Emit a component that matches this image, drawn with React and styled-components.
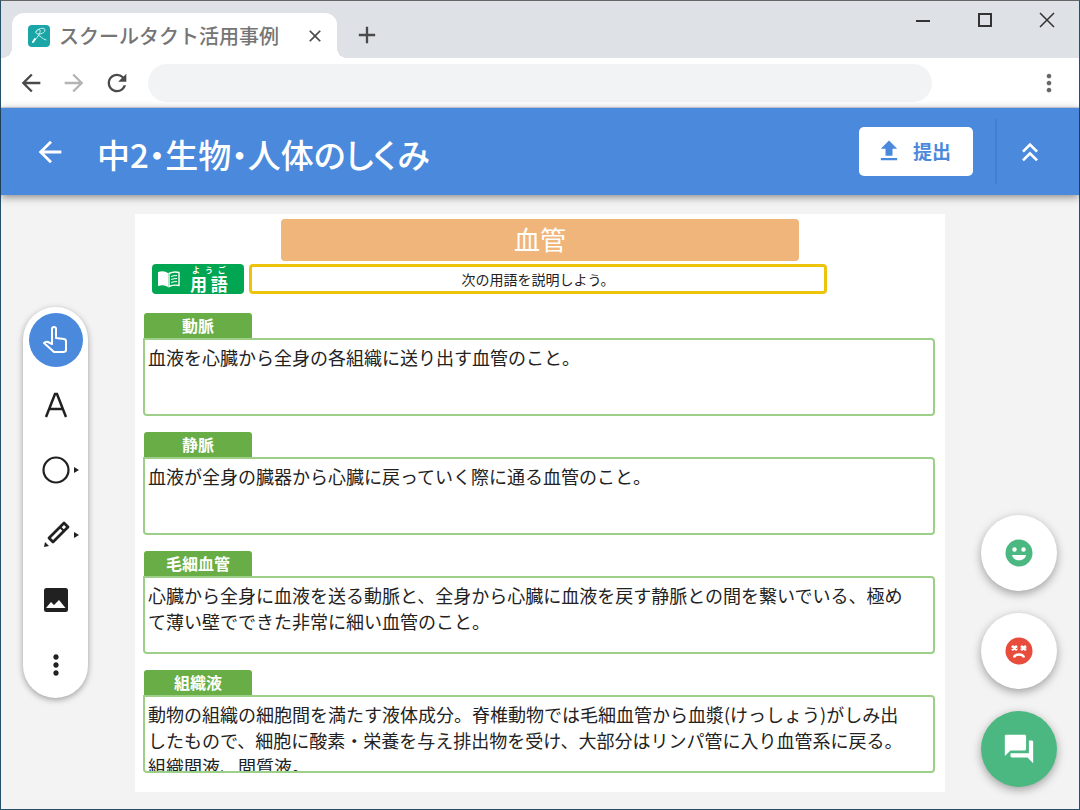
import React, { useState } from 'react'
import styled, { createGlobalStyle } from 'styled-components'
import {
  MdAdd,
  MdArrowBack,
  MdArrowForward,
  MdClose,
  MdForum,
  MdKeyboardDoubleArrowUp,
  MdMoreVert,
  MdRefresh,
  MdUpload,
} from 'react-icons/md'

const GlobalStyle = createGlobalStyle`
  * {
    box-sizing: border-box;
  }

  body {
    margin: 0;
    font-family: "Noto Sans CJK JP", "Noto Sans", sans-serif;
  }

  button {
    padding: 0;
    border: none;
    background: none;
    font-family: inherit;
    cursor: pointer;
  }

  svg {
    display: block;
  }
`

const Window = styled.div`
  display: flex;
  flex-direction: column;
  min-height: 100vh;
  border: 1px solid #24506a;
  border-top-color: #666;
  background-color: #f3f3f3;
`

const TabStrip = styled.div`
  display: flex;
  align-items: flex-end;
  height: 57px;
  padding-left: 11px;
  background-color: #dee1e6;
`

const Tab = styled.div`
  position: relative;
  display: flex;
  align-items: center;
  width: 325px;
  height: 45px;
  padding: 0 12px 0 16px;
  border-radius: 12px 12px 0 0;
  background-color: #fff;

  &::before,
  &::after {
    content: '';
    position: absolute;
    bottom: 0;
    width: 10px;
    height: 10px;
  }

  &::before {
    left: -10px;
    background: radial-gradient(circle at 0 0, transparent 10px, #fff 10px);
  }

  &::after {
    right: -10px;
    background: radial-gradient(circle at 100% 0, transparent 10px, #fff 10px);
  }
`

const TabTitle = styled.span`
  flex: 1;
  margin-left: 9px;
  color: #757575;
  font-size: 20px;
  font-weight: 500;
  line-height: 24px;
  white-space: nowrap;
`

const IconButton = styled.button`
  display: flex;
  justify-content: center;
  align-items: center;
  flex: none;
  width: ${(props) => props.$size || 28}px;
  height: ${(props) => props.$size || 28}px;
  color: ${(props) => props.$color || '#4a4a4a'};
`

const NewTab = styled(IconButton)`
  margin: 0 0 9px 16px;
`

const WindowControls = styled.div`
  display: flex;
  align-self: flex-start;
  gap: 34px;
  margin: 5px 18px 0 auto;
`

const Toolbar = styled.div`
  display: flex;
  align-items: center;
  gap: 15px;
  height: 50px;
  padding: 0 16px;
  border-bottom: 1px solid #d5dbe5;
  background-color: #fff;
`

const Address = styled.input`
  flex: 1;
  min-width: 0;
  height: 38px;
  margin: 0 88px 0 2px;
  padding: 0 20px;
  border: none;
  border-radius: 19px;
  background-color: #f1f3f4;
  font-size: 16px;
`

const Header = styled.header`
  position: relative;
  display: flex;
  align-items: center;
  height: 87px;
  padding: 0 33px 0 32px;
  background-color: #4a89dc;
  box-shadow: 0 2px 8px rgb(0 0 0 / 45%);
  color: #fff;
`

const Title = styled.h1`
  flex: 1;
  margin: 4px 0 0 30px;
  font-size: 33px;
  font-weight: 500;
  font-feature-settings: 'palt';
  line-height: 40px;
`

const Submit = styled.button`
  display: flex;
  align-items: center;
  justify-content: center;
  gap: 10px;
  width: 114px;
  height: 49px;
  padding: 0 6px 2px 0;
  border-radius: 5px;
  background-color: #fff;
  color: #4a89dc;
  font-size: 19px;
  font-weight: 700;
`

const Divider = styled.div`
  width: 2px;
  height: 65px;
  margin: 0 17px 0 22px;
  background-color: #427fd2;
`

const Workspace = styled.main`
  display: grid;
  grid-template-columns: 65px 1fr 76px;
  flex: 1;
  padding: 19px 22px 17px;
`

const Rail = styled.nav`
  display: flex;
  flex-direction: column;
  align-items: center;
  align-self: center;
  gap: 11px;
  margin-bottom: 2px;
  padding: 6px 0;
  border-radius: 33px;
  background-color: #fff;
  box-shadow: 0 2px 6px rgb(0 0 0 / 35%);
`

const Tool = styled.button`
  display: flex;
  justify-content: center;
  align-items: center;
  width: 54px;
  height: 54px;
  border-radius: 50%;
  background-color: ${(props) => (props.$active ? '#4a89dc' : 'transparent')};
  color: ${(props) => (props.$active ? '#fff' : '#212121')};
`

const Sheet = styled.article`
  margin: 0 36px 0 47px;
  padding-top: 5px;
  background-color: #fff;
`

const SheetTitle = styled.h2`
  height: 42px;
  margin: 0 146px;
  border-radius: 4px;
  background-color: #f0b57a;
  color: #fff;
  font-size: 26px;
  font-weight: 400;
  line-height: 40px;
  text-align: center;
`

const Instruction = styled.div`
  display: flex;
  gap: 5px;
  height: 30px;
  margin: 3px 118px 19px 17px;
`

const Badge = styled.div`
  display: flex;
  align-items: center;
  gap: 10px;
  width: 92px;
  padding-left: 6px;
  border-radius: 4px;
  background-color: #00a651;
  color: #fff;
`

const BadgeText = styled.ruby`
  display: flex;
  flex-direction: column-reverse;
  font-size: 17px;
  font-weight: 700;
  line-height: 18px;
  white-space: nowrap;

  rt {
    display: block;
    padding: 0 2px;
    font-size: 8px;
    line-height: 10px;
    text-align-last: justify;
  }
`

const Prompt = styled.p`
  flex: 1;
  margin: 0;
  border: 3px solid #edc40c;
  border-radius: 4px;
  color: #222;
  font-size: 14px;
  line-height: 24px;
  text-align: center;
`

const Term = styled.section`
  display: flex;
  flex-direction: column;
  margin: 0 10px 16px 8px;
`

const TermLabel = styled.label`
  width: 108px;
  margin-left: 1px;
  border-radius: 3px 3px 0 0;
  background-color: #68ad45;
  color: #fff;
  font-size: 16px;
  font-weight: 700;
  line-height: 25px;
  text-align: center;
`

const Answer = styled.textarea`
  display: block;
  width: 100%;
  height: 78px;
  padding: 4px 25px 0 3px;
  border: 2px solid #9ecf89;
  border-radius: 0 4px 4px 4px;
  outline: none;
  overflow: hidden;
  resize: none;
  background-color: #fff;
  color: #222;
  font-family: inherit;
  font-size: 18px;
  font-weight: 400;
  line-height: 26px;
`

const Actions = styled.div`
  display: flex;
  flex-direction: column;
  align-self: end;
  gap: 22px;
  margin-bottom: 5px;
`

const Fab = styled.button`
  display: flex;
  justify-content: center;
  align-items: center;
  width: 76px;
  height: 76px;
  border-radius: 50%;
  background-color: ${(props) => props.$bg || '#fff'};
  box-shadow: 0 3px 10px rgb(0 0 0 / 35%);
  color: ${(props) => props.$color};
`

const Favicon = () => (
  <svg width="22" height="22" viewBox="0 0 22 22" fill="none" stroke="#c9f0ee" strokeLinecap="round">
    <rect width="22" height="22" rx="4" fill="#1aa6a6" stroke="none" />
    <path d="M8 7c2-4 9-5 9-2 0 4-8 5-9 3s3-5 4-3c1 3-3 8-6 11" />
    <path d="M10 10c3 1 4 4 8 5" />
    <path d="M5 17l2-3" stroke="#fff" strokeWidth="2" />
  </svg>
)

const PointIcon = () => (
  <svg width="30" height="30" viewBox="0 0 30 30" fill="none" stroke="currentColor" strokeWidth="2" strokeLinejoin="round">
    <path d="M11 19V4a2 2 0 0 1 4 0v9l8 1q2 0 2 3v8q0 2-3 2H13L3 18q2-2 4-1l4 2z" />
  </svg>
)

const TextIcon = () => (
  <svg width="28" height="28" viewBox="0 0 28 28" fill="none" stroke="currentColor" strokeWidth="2.5">
    <path d="M4 26 13 3h2l9 23M8 18h12" />
  </svg>
)

const ShapeIcon = () => (
  <svg width="48" height="30" viewBox="0 0 48 30">
    <circle cx="24" cy="15" r="12.5" fill="none" stroke="currentColor" strokeWidth="2.2" />
    <path d="M42 12v6l5-3z" fill="currentColor" />
  </svg>
)

const PenIcon = () => (
  <svg width="48" height="30" viewBox="0 0 48 30">
    <path
      d="M32 3 36 7 21 22 17 18z"
      fill="none"
      stroke="currentColor"
      strokeWidth="2.8"
      strokeLinejoin="round"
    />
    <path d="M28 7 32 11" stroke="currentColor" strokeWidth="2" />
    <path d="M12 27l1-5 4 4z" fill="currentColor" />
    <path d="M42 12v6l5-3z" fill="currentColor" />
  </svg>
)

const ImageIcon = () => (
  <svg width="26" height="26" viewBox="0 0 26 26">
    <rect x="1" y="1" width="24" height="24" rx="2.5" fill="currentColor" />
    <path d="M3 21 8 15l3 3 5-5L22.5 21z" fill="#fff" />
  </svg>
)

const HappyIcon = () => (
  <svg width="28" height="28" viewBox="0 0 28 28">
    <circle cx="14" cy="14" r="13.5" fill="currentColor" />
    <circle cx="9.5" cy="10.5" r="2.2" fill="#fff" />
    <circle cx="18.5" cy="10.5" r="2.2" fill="#fff" />
    <path d="M7 16h14c-1 7-13 7-14 0z" fill="#fff" />
  </svg>
)

const SadIcon = () => (
  <svg width="28" height="28" viewBox="0 0 28 28">
    <circle cx="14" cy="14" r="13.5" fill="currentColor" />
    <path d="M7 9l5 4m0-4-5 4M16 9l5 4m0-4-5 4" stroke="#fff" strokeWidth="2.8" />
    <path d="M9 20.5c1-4 9-4 10 0" fill="none" stroke="#fff" strokeWidth="2.4" />
  </svg>
)

const BookIcon = () => (
  <svg width="22" height="18" viewBox="0 0 22 18">
    <path d="M0 2q6-2 10 1v14Q6 14 0 16z" fill="currentColor" />
    <path d="M11 3.5Q16 1 21 2.5v13q-5-1-10 1z" fill="none" stroke="currentColor" strokeWidth="1.4" />
    <path d="M13 6.5q3-1 6-1M13 9.5q3-1 6-1M13 12.5q3-1 6-1" fill="none" stroke="currentColor" />
  </svg>
)

const MinimizeIcon = () => (
  <svg width="16" height="16" viewBox="0 0 16 16" stroke="currentColor" strokeWidth="2">
    <path d="M1 9h14" />
  </svg>
)

const MaximizeIcon = () => (
  <svg width="16" height="16" viewBox="0 0 16 16" fill="none" stroke="currentColor" strokeWidth="2">
    <path d="M2 2h12v12H2z" />
  </svg>
)

const CloseIcon = () => (
  <svg width="16" height="16" viewBox="0 0 16 16" stroke="currentColor" strokeWidth="1.5">
    <path d="M1 1l14 14M15 1 1 15" />
  </svg>
)

const tools = [
  { id: 'point', label: '選択', icon: <PointIcon /> },
  { id: 'text', label: 'テキスト', icon: <TextIcon /> },
  { id: 'shape', label: '図形', icon: <ShapeIcon /> },
  { id: 'pen', label: 'ペン', icon: <PenIcon /> },
  { id: 'image', label: '画像', icon: <ImageIcon /> },
  { id: 'more', label: 'その他', icon: <MdMoreVert size={32} /> },
]

const terms = [
  { id: 'artery', name: '動脈', text: '血液を心臓から全身の各組織に送り出す血管のこと。' },
  { id: 'vein', name: '静脈', text: '血液が全身の臓器から心臓に戻っていく際に通る血管のこと。' },
  {
    id: 'capillary',
    name: '毛細血管',
    text: '心臓から全身に血液を送る動脈と、全身から心臓に血液を戻す静脈との間を繋いでいる、極めて薄い壁でできた非常に細い血管のこと。',
  },
  {
    id: 'fluid',
    name: '組織液',
    text: '動物の組織の細胞間を満たす液体成分。脊椎動物では毛細血管から血漿(けっしょう)がしみ出したもので、細胞に酸素・栄養を与え排出物を受け、大部分はリンパ管に入り血管系に戻る。組織間液、間質液。',
  },
]

const App = () => {
  const [tool, setTool] = useState('point')

  return (
    <Window>
      <GlobalStyle />
      <TabStrip>
        <Tab>
          <Favicon />
          <TabTitle>スクールタクト活用事例</TabTitle>
          <IconButton $size={20} aria-label="タブを閉じる"><MdClose size={20} stroke="currentColor" /></IconButton>
        </Tab>
        <NewTab aria-label="新しいタブ"><MdAdd size={28} /></NewTab>
        <WindowControls>
          <IconButton $color="#333" aria-label="最小化"><MinimizeIcon /></IconButton>
          <IconButton $color="#333" aria-label="最大化"><MaximizeIcon /></IconButton>
          <IconButton $color="#333" aria-label="閉じる"><CloseIcon /></IconButton>
        </WindowControls>
      </TabStrip>
      <Toolbar>
        <IconButton aria-label="戻る"><MdArrowBack size={28} /></IconButton>
        <IconButton $color="#b4b4b4" aria-label="進む"><MdArrowForward size={28} /></IconButton>
        <IconButton aria-label="再読み込み"><MdRefresh size={28} /></IconButton>
        <Address type="text" aria-label="アドレス" />
        <IconButton $color="#666" aria-label="メニュー"><MdMoreVert size={28} /></IconButton>
      </Toolbar>
      <Header>
        <IconButton $size={34} $color="#fff" aria-label="一覧に戻る"><MdArrowBack size={34} /></IconButton>
        <Title>中2・生物・人体のしくみ</Title>
        <Submit>
          <MdUpload size={28} />
          提出
        </Submit>
        <Divider />
        <IconButton $size={32} $color="#fff" aria-label="たたむ"><MdKeyboardDoubleArrowUp size={32} /></IconButton>
      </Header>
      <Workspace>
        <Rail>
          {tools.map(({ id, label, icon }) => (
            <Tool key={id} $active={tool === id} aria-label={label} onClick={() => setTool(id)}>
              {icon}
            </Tool>
          ))}
        </Rail>
        <Sheet>
          <SheetTitle>血管</SheetTitle>
          <Instruction>
            <Badge>
              <BookIcon />
              <BadgeText>用 語<rt>よ う ご</rt></BadgeText>
            </Badge>
            <Prompt>次の用語を説明しよう。</Prompt>
          </Instruction>
          {terms.map(({ id, name, text }) => (
            <Term key={id}>
              <TermLabel htmlFor={id}>{name}</TermLabel>
              <Answer id={id} defaultValue={text} spellCheck={false} />
            </Term>
          ))}
        </Sheet>
        <Actions>
          <Fab $color="#4cb881" aria-label="わかった"><HappyIcon /></Fab>
          <Fab $color="#e74c3c" aria-label="わからない"><SadIcon /></Fab>
          <Fab $bg="#4cb881" $color="#fff" aria-label="コメント"><MdForum size={34} /></Fab>
        </Actions>
      </Workspace>
    </Window>
  )
}

export default App
